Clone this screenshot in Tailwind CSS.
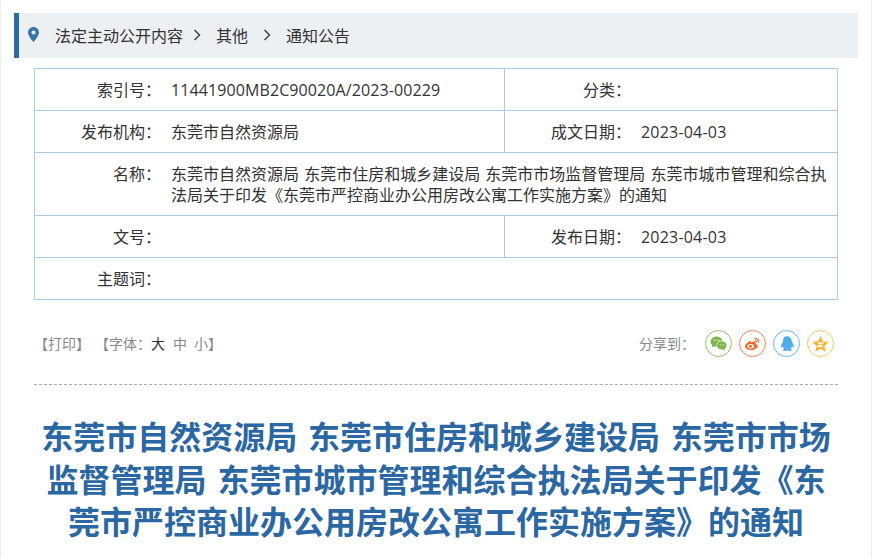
<!DOCTYPE html>
<html lang="zh-CN">
<head>
    <meta charset="UTF-8">
    <title>通知公告</title>
    <script src="https://cdn.jsdelivr.net/npm/@tailwindcss/browser@4"></script>
</head>
<body class="bg-white h-[558px] overflow-hidden font-['Open_Sans','Noto_Sans_CJK_SC',sans-serif] text-[#333]">
<div class="w-[872px] h-[558px] border-x border-[#eee] pl-[13px] pr-[13px] pt-[13px]">

    <!-- breadcrumb -->
    <div class="flex items-center h-[45px] bg-[#edf0f3] border-l-[5px] border-[#2b6ca3] text-base">
        <svg class="ml-[9px] w-[11px] h-[15px] mb-[3px]" viewBox="0 0 11 15"><path fill="#3a75a8" fill-rule="evenodd" d="M5.500 0C2.500 0 0 2.400 0 5.400 0 9 5.500 15 5.500 15S11 9 11 5.400C11 2.400 8.500 0 5.500 0zm0 7.400a2 2 0 1 1 0-4 2 2 0 0 1 0 4z"/></svg>
        <span class="ml-[16px]">法定主动公开内容</span>
        <svg class="ml-[10px] w-[8px] h-[12px] mb-[2px]" viewBox="0 0 8 12"><path fill="none" stroke="#444" stroke-width="1.500" d="M1.500 1l5 5-5 5"/></svg>
        <span class="ml-[15px]">其他</span>
        <svg class="ml-[15px] w-[8px] h-[12px] mb-[2px]" viewBox="0 0 8 12"><path fill="none" stroke="#444" stroke-width="1.500" d="M1.500 1l5 5-5 5"/></svg>
        <span class="ml-[15px]">通知公告</span>
    </div>

    <!-- info table -->
    <div class="mx-[20px] mt-[10px] border border-[#a9cbe4] text-base leading-[21px]">
        <div class="flex h-[42px] border-b border-[#a9cbe4]">
            <div class="flex items-center w-[470px] border-r border-[#a9cbe4] pt-[2px]">
                <span class="w-[126px] text-right">索引号：</span>
                <span class="ml-[10px] tracking-[0.1px]">11441900MB2C90020A/2023-00229</span>
            </div>
            <div class="flex items-center pt-[2px]">
                <span class="w-[126px] text-right">分类：</span>
            </div>
        </div>
        <div class="flex h-[42px] border-b border-[#a9cbe4]">
            <div class="flex items-center w-[470px] border-r border-[#a9cbe4] pt-[2px]">
                <span class="w-[126px] text-right">发布机构：</span>
                <span class="ml-[10px]">东莞市自然资源局</span>
            </div>
            <div class="flex items-center pt-[2px]">
                <span class="w-[126px] text-right">成文日期：</span>
                <span class="ml-[10px] tracking-[0.2px]">2023-04-03</span>
            </div>
        </div>
        <div class="flex h-[63px] border-b border-[#a9cbe4] pt-[11px]">
            <span class="w-[126px] shrink-0 text-right">名称：</span>
            <span class="ml-[10px] w-[660px] [word-spacing:1px]">东莞市自然资源局 东莞市住房和城乡建设局 东莞市市场监督管理局 东莞市城市管理和综合执法局关于印发《东莞市严控商业办公用房改公寓工作实施方案》的通知</span>
        </div>
        <div class="flex h-[42px] border-b border-[#a9cbe4]">
            <div class="flex items-center w-[470px] border-r border-[#a9cbe4] pt-[2px]">
                <span class="w-[126px] text-right">文号：</span>
            </div>
            <div class="flex items-center pt-[2px]">
                <span class="w-[126px] text-right">发布日期：</span>
                <span class="ml-[10px] tracking-[0.2px]">2023-04-03</span>
            </div>
        </div>
        <div class="flex items-center h-[41px] pt-[2px]">
            <span class="w-[126px] text-right">主题词：</span>
        </div>
    </div>

    <!-- tools -->
    <div class="flex items-center justify-between h-[85px] mx-[20px] border-b border-dashed border-[#aaa] pt-[3px] text-sm text-[#888]">
        <div class="flex items-center">
            <span>【打印】</span>
            <span class="ml-[5px]">【字体：</span>
            <span class="text-[#333]">大</span>
            <span class="ml-[8px]">中</span>
            <span class="ml-[7px]">小</span>
            <span>】</span>
        </div>
        <div class="flex items-center gap-[7px] pr-[4px]">
            <span class="mr-[3px]">分享到：</span>
            <span class="flex items-center justify-center w-[27px] h-[27px] rounded-full border-[1.500px] border-[#8cc760]">
                <svg class="w-[17px] h-[15px]" viewBox="0 0 18 16"><ellipse cx="7" cy="6" rx="6.500" ry="5.500" fill="#7ab648"/><path fill="#7ab648" d="M2.500 9l-.5 3 3-1.500z"/><ellipse cx="12.500" cy="10" rx="5.500" ry="4.800" fill="#7ab648" stroke="#fff" stroke-width=".8"/><path fill="#7ab648" d="M15 13.500l1 2.300-3-1.300z"/><circle cx="5" cy="4.500" r=".9" fill="#fff"/><circle cx="9" cy="4.500" r=".9" fill="#fff"/><circle cx="10.800" cy="9.500" r=".7" fill="#fff"/><circle cx="14.200" cy="9.500" r=".7" fill="#fff"/></svg>
            </span>
            <span class="flex items-center justify-center w-[27px] h-[27px] rounded-full border-[1.500px] border-[#f58250]">
                <svg class="w-[17px] h-[15px]" viewBox="0 0 18 16"><path fill="#f26a2e" d="M7.500 5C4 6.200 1 8.800 1 11c0 2.500 3 4 6.500 4 4 0 7-2 7-4.300 0-1.300-1.200-2-2.200-2.200.6-1.300.3-2.700-1.600-2.700-1 0-2.200.5-3.200 1 .3-1.300-.3-2.200-0-1.800z"/><ellipse cx="7" cy="11" rx="3.400" ry="2.600" fill="#fff"/><circle cx="6.800" cy="11" r="1.700" fill="#f26a2e"/><path fill="none" stroke="#f26a2e" stroke-width="1.300" d="M11 2.500c2.500-.5 5 1.500 4.300 4.500M11.500 4.800c1.200-.2 2 .7 1.700 1.800"/></svg>
            </span>
            <span class="flex items-center justify-center w-[27px] h-[27px] rounded-full border-[1.500px] border-[#63b7ee]">
                <svg class="w-[14px] h-[16px]" viewBox="0 0 16 18"><path fill="#4eaeea" d="M8 0C4.800 0 3.400 2.400 3.400 5.300 3.400 6.300 3 7 2.300 8.200 1.200 10 .6 12.500 1.300 13c.5.300 1.200-.6 1.700-1.300.3 1.300 1 2.300 1.700 3-1 .4-1.500 1-1.300 1.600.3.800 2.700.9 5 .2 2.300.7 4.700.6 5-.2.200-.6-.3-1.200-1.300-1.600.7-.7 1.400-1.700 1.700-3 .5.700 1.200 1.600 1.700 1.300.7-.5.100-3-1-4.800-.7-1.200-1.100-1.900-1.100-2.900C12.600 2.400 11.200 0 8 0z"/></svg>
            </span>
            <span class="flex items-center justify-center w-[27px] h-[27px] rounded-full border-[1.500px] border-[#fbc457]">
                <svg class="w-[17px] h-[16px]" viewBox="0 0 18 17"><path fill="#f9b233" d="M9 0l2.600 5.700 6.200.7-4.600 4.200 1.300 6.100L9 13.600l-5.500 3.100 1.300-6.100L.2 6.400l6.200-.7z"/><path fill="none" stroke="#fff" stroke-width="1.300" d="M6.300 7.500h5.200L6.500 11h5.400"/></svg>
            </span>
        </div>
    </div>

    <!-- title -->
    <h1 class="mx-[20px] mt-[31px] text-center text-[32px] leading-[42.500px] font-bold text-[#2b67a3] [word-spacing:2.500px]">东莞市自然资源局 东莞市住房和城乡建设局 东莞市市场监督管理局 东莞市城市管理和综合执法局关于印发《东莞市严控商业办公用房改公寓工作实施方案》的通知</h1>
</div>
</body>
</html>
